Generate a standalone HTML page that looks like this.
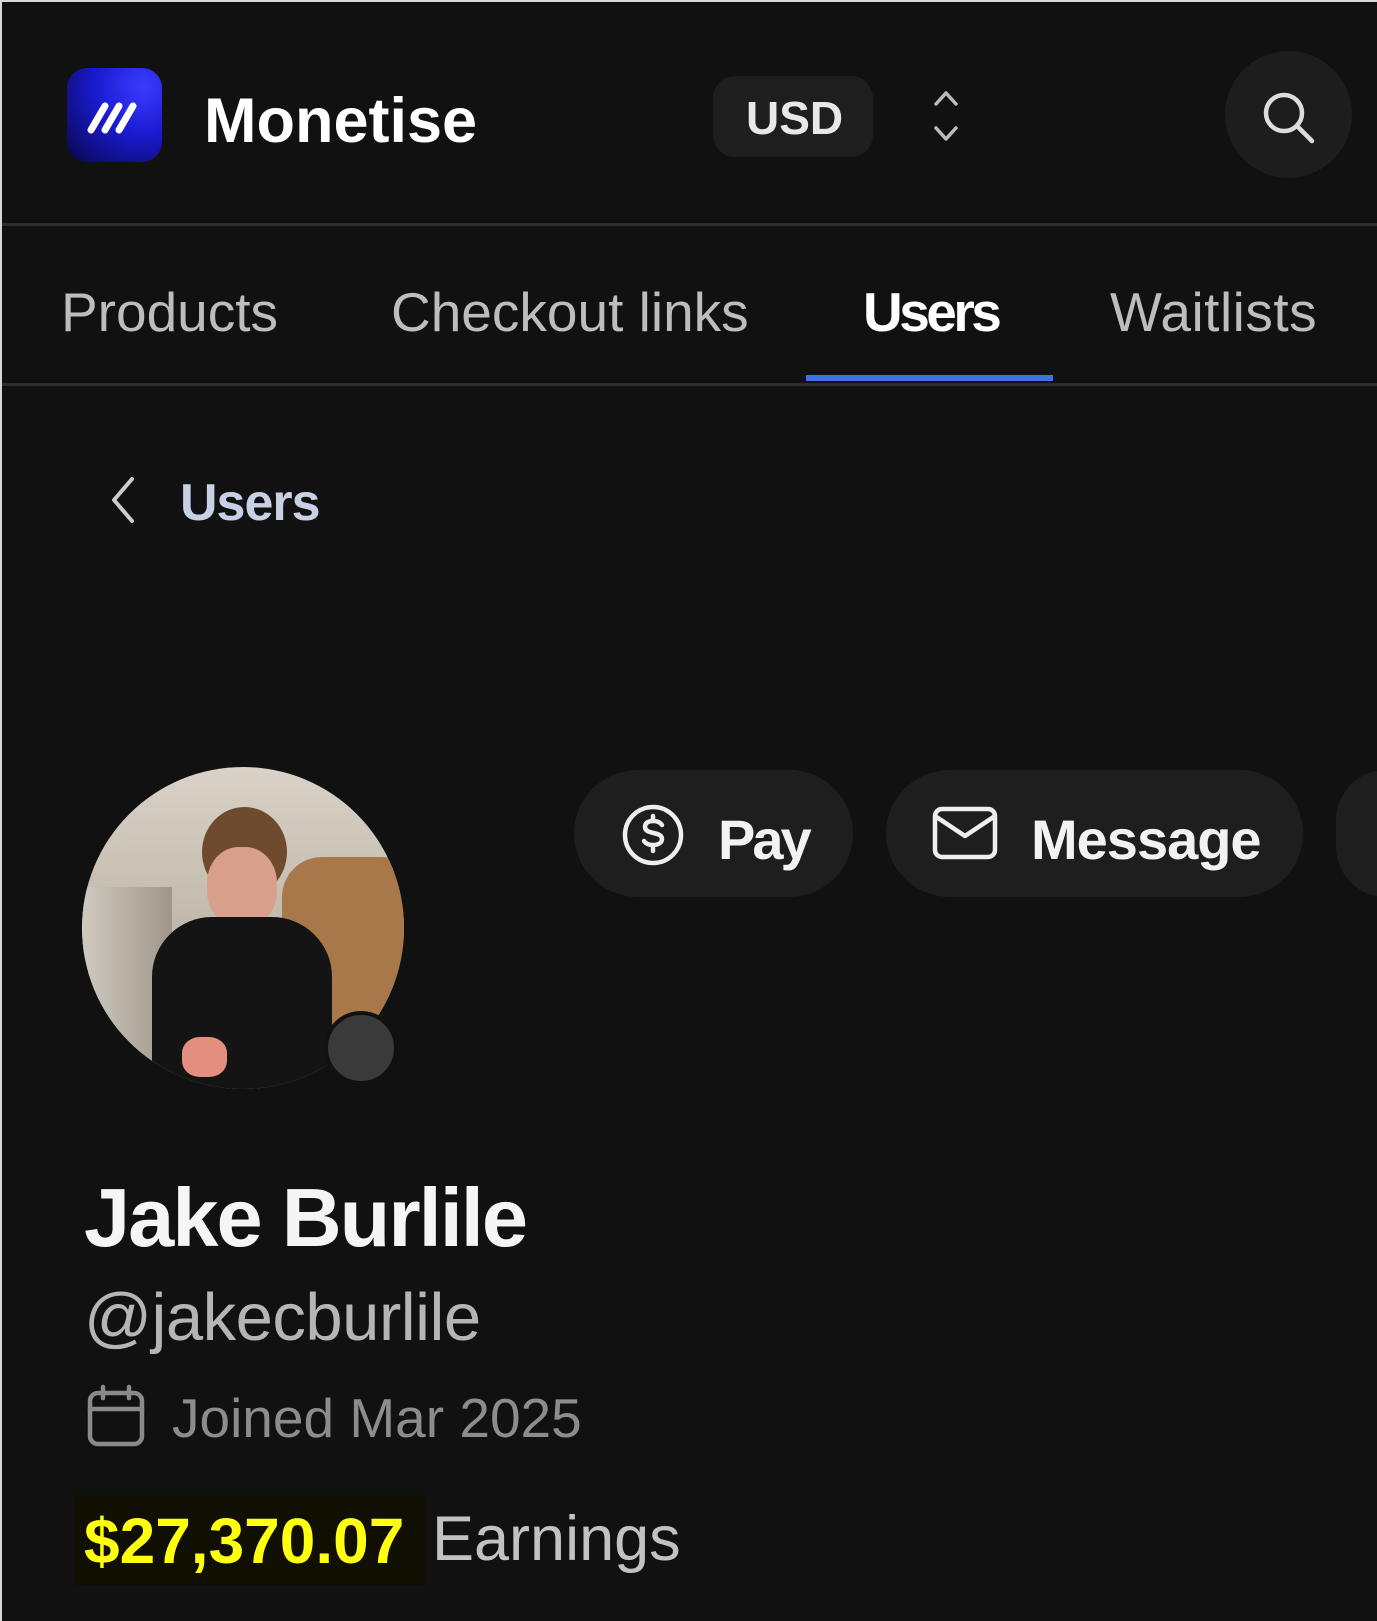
<!DOCTYPE html>
<html><head><meta charset="utf-8"><style>
html,body{margin:0;padding:0}
body{width:1377px;height:1621px;background:#111;position:relative;overflow:hidden;font-family:"Liberation Sans",sans-serif;box-sizing:border-box;border:2px solid #d8d8d8;border-right:none;border-bottom:none}
.a{position:absolute;white-space:nowrap;line-height:1}
</style></head><body>
<!-- logo -->
<div class="a" style="left:65px;top:66px;width:95px;height:94px;border-radius:20px;background:radial-gradient(circle at 80% 20%,#3b3bff 0%,#1a1ad0 45%,#07074a 100%);"></div>
<svg class="a" style="left:65px;top:66px" width="95" height="94" viewBox="0 0 95 94"><g stroke="#fff" stroke-width="7" stroke-linecap="round"><line x1="24" y1="62" x2="38" y2="38"/><line x1="38" y1="62" x2="52" y2="38"/><line x1="52" y1="62" x2="66" y2="38"/></g></svg>
<div class="a" style="left:202px;top:88px;font-size:63px;font-weight:bold;color:#fff">Monetise</div>
<!-- USD -->
<div class="a" style="left:711px;top:74px;width:160px;height:81px;border-radius:22px;background:#1e1e1e"></div>
<div class="a" style="left:744px;top:93px;font-size:46px;font-weight:bold;color:#e8e8e8">USD</div>
<svg class="a" style="left:928px;top:86px" width="32" height="56" viewBox="0 0 32 56"><g fill="none" stroke="#bbb" stroke-width="3.5" stroke-linecap="round" stroke-linejoin="round"><polyline points="6,16 16,5 26,16"/><polyline points="6,40 16,51 26,40"/></g></svg>
<!-- search -->
<div class="a" style="left:1223px;top:49px;width:127px;height:127px;border-radius:50%;background:#1d1d1d"></div>
<svg class="a" style="left:1255px;top:84px" width="64" height="64" viewBox="0 0 64 64"><g fill="none" stroke="#ddd" stroke-width="4.5" stroke-linecap="round"><circle cx="27" cy="27" r="18"/><line x1="40" y1="40" x2="55" y2="55"/></g></svg>
<div class="a" style="left:0;top:221px;width:1377px;height:3px;background:#2c2c2c"></div>
<!-- tabs -->
<div class="a" style="left:59px;top:283px;font-size:55px;color:#bdbdbd">Products</div>
<div class="a" style="left:389px;top:283px;font-size:55px;color:#bdbdbd">Checkout links</div>
<div class="a" style="left:861px;top:283px;font-size:55px;font-weight:bold;color:#fff;letter-spacing:-3.5px">Users</div>
<div class="a" style="left:1108px;top:283px;font-size:55px;color:#bdbdbd;letter-spacing:0.5px">Waitlists</div>
<div class="a" style="left:804px;top:373px;width:247px;height:6px;background:#3d72e0"></div>
<div class="a" style="left:0;top:381px;width:1377px;height:3px;background:#2c2c2c"></div>
<!-- back -->
<svg class="a" style="left:104px;top:472px" width="34" height="52" viewBox="0 0 34 52"><polyline points="26,5 8,26 26,47" fill="none" stroke="#ccc" stroke-width="4" stroke-linecap="round" stroke-linejoin="round"/></svg>
<div class="a" style="left:178px;top:475px;font-size:52px;font-weight:bold;color:#c8d0e6;letter-spacing:-1px">Users</div>
<!-- avatar -->
<div class="a" style="left:80px;top:765px;width:322px;height:322px;border-radius:50%;overflow:hidden;background:linear-gradient(180deg,#d8d2c8 0%,#c8c0b2 35%,#a9a095 100%)">
 <div class="a" style="left:200px;top:90px;width:140px;height:200px;border-radius:40px;background:#a9784a"></div>
 <div class="a" style="left:0;top:120px;width:90px;height:200px;background:linear-gradient(90deg,#cfcac0,#9f978a)"></div>
 <div class="a" style="left:120px;top:40px;width:85px;height:90px;border-radius:50%;background:#6e4a2e"></div>
 <div class="a" style="left:125px;top:80px;width:70px;height:80px;border-radius:45%;background:#d8a08a"></div>
 <div class="a" style="left:70px;top:150px;width:180px;height:200px;border-radius:60px 60px 0 0;background:#141414"></div>
 <div class="a" style="left:100px;top:270px;width:45px;height:40px;border-radius:40%;background:#e38f80"></div>
</div>
<div class="a" style="left:326px;top:1013px;width:66px;height:66px;border-radius:50%;background:#3a3a3a;border:4px solid #111;box-sizing:content-box;margin:-4px 0 0 -4px"></div>
<!-- buttons -->
<div class="a" style="left:572px;top:768px;width:279px;height:127px;border-radius:64px;background:#1e1e1e"></div>
<svg class="a" style="left:618px;top:800px" width="66" height="66" viewBox="0 0 66 66"><g fill="none" stroke="#eee" stroke-width="4.5" stroke-linecap="round"><circle cx="33" cy="33" r="28"/><path d="M42 23c-2-3-5-4-9-4-5 0-8 2-8 6 0 8 17 4 17 12 0 4-4 6-9 6-4 0-7-1-9-4M33 14v5M33 43v6"/></g></svg>
<div class="a" style="left:716px;top:810px;font-size:56px;font-weight:bold;color:#f2f2f2;letter-spacing:-3px">Pay</div>
<div class="a" style="left:884px;top:768px;width:417px;height:127px;border-radius:64px;background:#1e1e1e"></div>
<svg class="a" style="left:928px;top:802px" width="70" height="58" viewBox="0 0 70 58"><g fill="none" stroke="#eee" stroke-width="4.5" stroke-linejoin="round"><rect x="5" y="5" width="60" height="48" rx="7"/><polyline points="5,12 35,32 65,12"/></g></svg>
<div class="a" style="left:1029px;top:810px;font-size:56px;font-weight:bold;color:#f2f2f2;letter-spacing:-1px">Message</div>
<div class="a" style="left:1334px;top:768px;width:100px;height:127px;border-radius:64px;background:#1e1e1e"></div>
<!-- name -->
<div class="a" style="left:82px;top:1174px;font-size:83px;font-weight:bold;color:#f5f5f5;letter-spacing:-2px">Jake Burlile</div>
<div class="a" style="left:82px;top:1282px;font-size:67px;color:#b5b5b5;letter-spacing:-0.5px">@jakecburlile</div>
<svg class="a" style="left:84px;top:1382px" width="60" height="64" viewBox="0 0 60 64"><g fill="none" stroke="#8a8a8a" stroke-width="4.5" stroke-linecap="round"><rect x="4" y="9" width="52" height="51" rx="8"/><line x1="4" y1="25" x2="56" y2="25"/><line x1="17" y1="3" x2="17" y2="14"/><line x1="43" y1="3" x2="43" y2="14"/></g></svg>
<div class="a" style="left:170px;top:1389px;font-size:55px;color:#8c8c8c">Joined Mar 2025</div>
<div class="a" style="left:72px;top:1492px;width:351px;height:91px;background:#100f02"></div>
<div class="a" style="left:82px;top:1507px;font-size:64px;font-weight:bold;color:#ffff10;letter-spacing:0px">$27,370.07</div>
<div class="a" style="left:430px;top:1506px;font-size:63px;color:#c2c2c2">Earnings</div>
</body></html>
